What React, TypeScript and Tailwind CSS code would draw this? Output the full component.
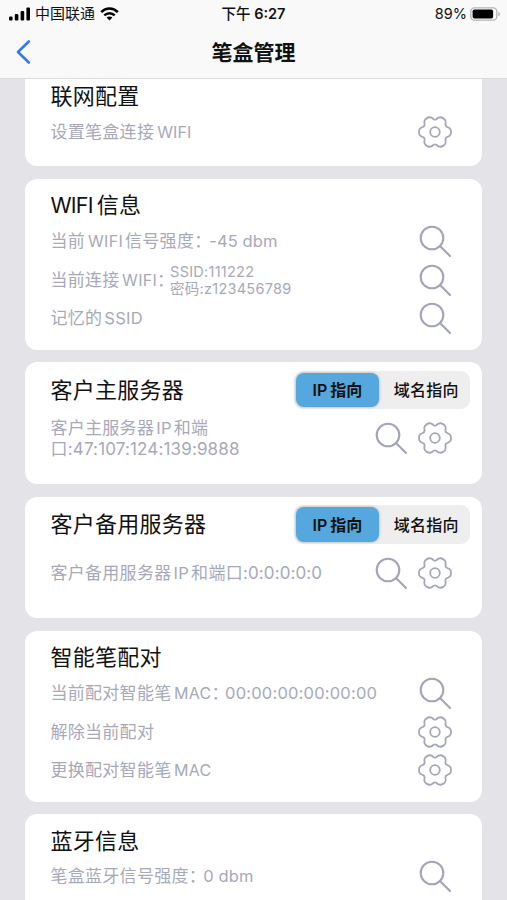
import React from "react";

const FONT = "font-[Inter,'Noto_Sans_CJK_SC',sans-serif]";

// Splits a label into CJK and Latin runs so each can carry its own spacing.
function Label({ text, latin = "" }: { text: string; latin?: string }) {
  const parts = text.split(/([\x20-\x7e]+)/).filter(Boolean);
  return (
    <>
      {parts.map((part, i) =>
        /^[\x20-\x7e]/.test(part) ? (
          <span key={i} className={latin}>
            {part}
          </span>
        ) : (
          <span key={i}>{part}</span>
        )
      )}
    </>
  );
}

// Closed smooth outline with six rounded teeth.
function gearPath(cx: number, cy: number) {
  const profile: [number, number][] = [
    [-24, 12.9],
    [-16, 14.8],
    [-9, 15.8],
    [0, 16],
    [9, 15.8],
    [16, 14.8],
    [24, 12.9],
    [30, 12.4],
  ];
  const pts: [number, number][] = [];
  for (let k = 0; k < 6; k++) {
    for (const [a, r] of profile) {
      const t = ((a + k * 60) * Math.PI) / 180;
      pts.push([cx + r * Math.cos(t), cy + r * Math.sin(t)]);
    }
  }
  const n = pts.length;
  const f = (v: number) => v.toFixed(2);
  let d = `M${f(pts[0][0])} ${f(pts[0][1])}`;
  for (let i = 0; i < n; i++) {
    const p0 = pts[(i + n - 1) % n];
    const p1 = pts[i];
    const p2 = pts[(i + 1) % n];
    const p3 = pts[(i + 2) % n];
    d += `C${f(p1[0] + (p2[0] - p0[0]) / 6)} ${f(p1[1] + (p2[1] - p0[1]) / 6)} ${f(
      p2[0] - (p3[0] - p1[0]) / 6
    )} ${f(p2[1] - (p3[1] - p1[1]) / 6)} ${f(p2[0])} ${f(p2[1])}`;
  }
  return d + "Z";
}

const GEAR = gearPath(17, 17);

function Gear() {
  return (
    <svg width="34" height="34" viewBox="0 0 34 34" fill="none" stroke="#a5a7b8" strokeWidth="1.8" className="shrink-0">
      <path d={GEAR} />
      <circle cx="17" cy="17" r="4.8" />
    </svg>
  );
}

function Magnifier() {
  return (
    <svg width="34" height="34" viewBox="0 0 34 34" fill="none" stroke="#a3a5b7" strokeWidth="2.1" className="shrink-0">
      <circle cx="14" cy="14" r="11.3" />
      <path d="M22.2 22.2L32 32" strokeLinecap="round" />
    </svg>
  );
}

function Card({ children, className }: { children: React.ReactNode; className: string }) {
  return <section className={`w-[457px] shrink-0 bg-white pl-[25.4px] ${className}`}>{children}</section>;
}

function Title({ text, latin }: { text: string; latin?: string }) {
  return (
    <h2 className="text-[22px] leading-[35px] tracking-[0.25px] whitespace-nowrap text-[#111]">
      <Label text={text} latin={latin} />
    </h2>
  );
}

function Row({ children, icons, className = "h-[38.7px]" }: { children: React.ReactNode; icons: React.ReactNode; className?: string }) {
  return (
    <div className={`flex items-center justify-between pr-[30.3px] text-[17px] tracking-[0.3px] whitespace-nowrap text-[#a7a9b9] ${className}`}>
      <div className="flex items-baseline pt-[1.5px]">{children}</div>
      <div className="flex items-center gap-[10px]">{icons}</div>
    </div>
  );
}

function Segmented() {
  return (
    <div className="mr-3 flex h-[38.5px] w-[176.5px] items-center rounded-[9px] bg-[#eeeeef] p-[2px] text-[16px] text-[#111]">
      <div className="flex h-full w-[83px] items-center justify-center rounded-[8px] bg-[#55a8dd] pl-px font-bold shadow-[0_0_3px_rgba(0,0,0,0.3)]">
        <span className="mr-[3px] font-semibold">IP</span>指向
      </div>
      <div className="flex flex-1 items-center justify-center pl-[6px] font-medium tracking-[0.2px]">域名指向</div>
    </div>
  );
}

function StatusBar() {
  return (
    <div className="grid h-[27px] grid-cols-[1fr_auto_1fr] items-center text-[14.5px] text-[#111]">
      <div className="flex items-center pl-[9px]">
        <svg width="22" height="14" viewBox="0 0 22 14" fill="#000">
          <rect x="0" y="9.5" width="3.6" height="4" rx="1" />
          <rect x="5.8" y="7" width="3.6" height="6.5" rx="1" />
          <rect x="11.6" y="4" width="3.6" height="9.5" rx="1" />
          <rect x="17.4" y="0.5" width="3.6" height="13" rx="1" />
        </svg>
        <span className="ml-[4px] pt-[1px] text-[15px] leading-[22px]">中国联通</span>
        <svg width="19" height="14" viewBox="0 0 19 14" className="ml-[5px]" fill="none" stroke="#000" strokeWidth="2.5">
          <path d="M1.2 5.2C6 .4 13 .4 17.8 5.2" />
          <path d="M4.3 8.3C7.3 5.4 11.7 5.4 14.7 8.3" />
          <path d="M9.5 13.5L6.6 10.5C8.2 9 10.8 9 12.4 10.5Z" fill="#000" stroke="none" />
        </svg>
      </div>
      <div className="font-semibold">
        <span className="font-medium">下午</span> 6:27
      </div>
      <div className="flex items-center justify-end pr-[6px]">
        <span className="mr-[3px]">89%</span>
        <svg width="31" height="14" viewBox="0 0 31 14">
          <rect x="0.8" y="0.8" width="26" height="12.4" rx="3.6" fill="#fff" stroke="#b4b4b4" strokeWidth="1.3" />
          <rect x="2.6" y="2.5" width="20.5" height="9" rx="1.8" fill="#000" />
          <path d="M28.3 4.7C30.5 5.5 30.5 8.5 28.3 9.3Z" fill="#b4b4b4" />
        </svg>
      </div>
    </div>
  );
}

export default function App() {
  return (
    <div className={`flex h-[900px] w-[507px] flex-col overflow-hidden bg-[#e3e3e8] ${FONT}`} lang="zh-CN">
      <header className="h-[79px] shrink-0 border-b border-[#dcdcde] bg-[#f9f9f9]">
        <StatusBar />
        <div className="grid h-[50px] grid-cols-[1fr_auto_1fr] items-center">
          <svg width="16" height="26" viewBox="0 0 16 26" className="ml-[16px]" fill="none" stroke="#3478f0" strokeWidth="2.6">
            <path d="M12.8 2.5L2 13L12.8 23.5" strokeLinecap="round" strokeLinejoin="round" />
          </svg>
          <h1 className="pt-px text-[21px] leading-none font-bold text-[#111]">笔盒管理</h1>
        </div>
      </header>
      <main className="flex min-h-0 flex-1 flex-col gap-[12.5px] overflow-hidden pl-[25px]">
        <Card className="h-[87px] rounded-b-[12px]">
          <Title text="联网配置" />
          <Row icons={<Gear />} className="h-[36px]">
            <Label text="设置笔盒连接WIFI" latin="ml-[3px] text-[16px] tracking-[0.1px]" />
          </Row>
        </Card>
        <Card className="h-[171px] rounded-[12px] pt-[9.5px]">
          <Title text="WIFI信息" latin="mr-[4px] text-[21.5px] tracking-[-0.8px]" />
          <div className="-mt-[1.5px]">
            <Row icons={<Magnifier />}>
              <span>当前</span>
              <span className="mr-[2px] ml-[3px] text-[16px]">WIFI</span>
              <span>信号强度</span>
              <span className="w-[15px] [font-feature-settings:'halt']">：</span>
              <span className="text-[16.5px] tracking-[0.1px]">-45 dbm</span>
            </Row>
            <Row icons={<Magnifier />}>
              <div className="flex items-center">
                <div className="flex items-baseline">
                  <span>当前连接</span>
                  <span className="ml-[2.5px] text-[16px]">WIFI</span>
                  <span className="w-[13px] [font-feature-settings:'halt']">：</span>
                </div>
                <span className="text-[14.5px] leading-[17.3px] tracking-[0.25px]">
                  SSID:111222
                  <br />
                  密码:z123456789
                </span>
              </div>
            </Row>
            <Row icons={<Magnifier />}>
              <Label text="记忆的SSID" latin="ml-[2px] text-[16.5px]" />
            </Row>
          </div>
        </Card>
        <Card className="h-[122px] rounded-[12px] pt-[9px]">
          <div className="flex h-[38px] items-center justify-between">
            <Title text="客户主服务器" />
            <Segmented />
          </div>
          <Row icons={<><Magnifier /><Gear /></>} className="h-[58px]">
            <div className="leading-[20.5px]">
              <Label text="客户主服务器IP和端" latin="mx-[2px] text-[16.5px]" />
              <br />
              <Label text="口:47:107:124:139:9888" latin="tracking-[0.15px]" />
            </div>
          </Row>
        </Card>
        <Card className="h-[121.5px] rounded-[12px] pt-[9px]">
          <div className="flex h-[38px] items-center justify-between">
            <Title text="客户备用服务器" />
            <Segmented />
          </div>
          <Row icons={<><Magnifier /><Gear /></>} className="h-[58px]">
            <span>客户备用服务器</span>
            <span className="mx-[2px] text-[16.5px]">IP</span>
            <span>和端口</span>
            <span className="tracking-[0.1px]">:0:0:0:0:0</span>
          </Row>
        </Card>
        <Card className="h-[171px] rounded-[12px] pt-[9.5px]">
          <Title text="智能笔配对" />
          <div className="-mt-[1.5px]">
            <Row icons={<Magnifier />}>
              <span>当前配对智能笔</span>
              <span className="ml-[2.5px] text-[16px]">MAC</span>
              <span className="w-[13.5px] [font-feature-settings:'halt']">：</span>
              <span className="text-[16.5px] tracking-[0.2px]">00:00:00:00:00:00</span>
            </Row>
            <Row icons={<Gear />}>解除当前配对</Row>
            <Row icons={<Gear />}>
              <Label text="更换配对智能笔MAC" latin="ml-[2.5px] text-[16px]" />
            </Row>
          </div>
        </Card>
        <Card className="h-[171px] rounded-[12px] pt-[9.5px]">
          <Title text="蓝牙信息" />
          <div className="-mt-[1.5px]">
            <Row icons={<Magnifier />}>
              <span>笔盒蓝牙信号强度</span>
              <span className="w-[14.5px] [font-feature-settings:'halt']">：</span>
              <span className="text-[16.5px] tracking-[0.1px]">0 dbm</span>
            </Row>
          </div>
        </Card>
      </main>
    </div>
  );
}
